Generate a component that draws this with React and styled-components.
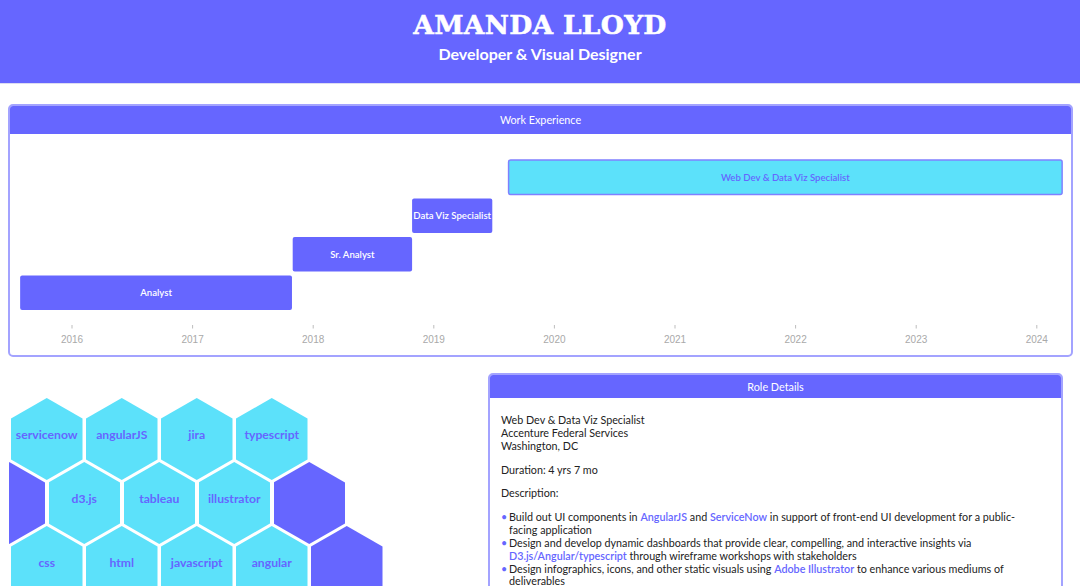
import React from "react";
import styled, { createGlobalStyle } from "styled-components";

const PURPLE = "#6666ff";
const CYAN = "#5ce1fa";
const LINE = "#a3a3ff";

const GlobalStyle = createGlobalStyle`
  body {
    margin: 0;
    background: #ffffff;
    font-family: Lato, "Noto Sans", sans-serif;
    color: #222;
  }
`;

const Header = styled.header`
  background: ${PURPLE};
  height: 73px;
  padding-top: 10px;
  border-bottom: 1px solid #dcdcf2;
  display: flex;
  flex-direction: column;
  align-items: center;
  color: #fff;
`;

const Name = styled.h1`
  margin: 0;
  font-family: "DejaVu Serif", "Liberation Serif", serif;
  font-weight: 700;
  font-size: 26.5px;
  line-height: 30px;
  letter-spacing: 0.3px;
  -webkit-text-stroke: 0.5px #fff;
`;

const Tagline = styled.h2`
  margin: 4px 0 0;
  font-family: Lato, sans-serif;
  font-weight: 700;
  font-size: 16px;
  line-height: 20px;
`;

const Main = styled.main`
  padding: 20px 7px 0 8px;
`;

const Panel = styled.section`
  box-sizing: border-box;
  border: 2px solid ${LINE};
  border-radius: 5px;
  overflow: hidden;
  background: #fff;
`;

const PanelTitle = styled.div`
  background: ${PURPLE};
  color: #fff;
  text-align: center;
  font-size: 10.8px;
  height: ${(p) => p.$h}px;
  line-height: ${(p) => p.$h}px;
`;

const ChartSvg = styled.svg`
  display: block;
`;

const BarLabel = styled.text`
  font-family: Lato, sans-serif;
  font-weight: 600;
  font-size: 9.6px;
`;

const YearLabel = styled.text`
  font-family: "Liberation Sans", Arial, sans-serif;
  font-size: 10px;
  fill: #a9a9a9;
`;

const Lower = styled.div`
  display: flex;
  margin-top: 16px;
  gap: 10px;
`;

const HexBoard = styled.div`
  flex: 1;
  overflow: hidden;
  margin-left: 1px;
  padding: 25px 0 0 2px;
  height: 200px;
`;

const HexRow = styled.div`
  display: flex;
  gap: 3.5px;
  margin-left: ${(p) => (p.$shift ? "-37.5px" : "0")};
  & + & {
    margin-top: -18px;
  }
`;

const Hex = styled.div`
  flex: 0 0 71.5px;
  height: 82px;
  clip-path: polygon(50% 0, 100% 25%, 100% 75%, 50% 100%, 0 75%, 0 25%);
  background: ${(p) => (p.$filled ? PURPLE : CYAN)};
  color: ${PURPLE};
  display: flex;
  align-items: center;
  justify-content: center;
  padding-bottom: 9px;
  box-sizing: border-box;
  font-weight: 700;
  font-size: 12.2px;
`;

const RolePanel = styled(Panel)`
  flex: 0 0 575px;
  margin-right: 10px;
  align-self: flex-start;
`;

const RoleBody = styled.div`
  padding: 16px 30px 20px 11px;
  font-size: 10.75px;
  line-height: 12.85px;
`;

const Para = styled.p`
  margin: 0 0 11px;
`;

const Bullets = styled.ul`
  margin: 0;
  padding: 0;
  list-style: none;
`;

const Bullet = styled.li`
  padding-left: 8px;
  &::before {
    content: "•";
    color: ${PURPLE};
    display: inline-block;
    width: 8px;
    margin-left: -8px;
  }
`;

const Tech = styled.span`
  color: ${PURPLE};
  font-weight: 600;
`;

const jobs = [
  { title: "Web Dev & Data Viz Specialist", start: 2019.62, end: 2024.21, row: 0, active: true },
  { title: "Data Viz Specialist", start: 2018.82, end: 2019.485, row: 1 },
  { title: "Sr. Analyst", start: 2017.83, end: 2018.82, row: 2 },
  { title: "Analyst", start: 2015.57, end: 2017.824, row: 3 },
];

const years = [2016, 2017, 2018, 2019, 2020, 2021, 2022, 2023, 2024];
const xOf = (y) => 62 + (y - 2016) * 120.6;

function Timeline() {
  return (
    <ChartSvg width="1061" height="221">
      {jobs.map((j) => {
        const x = xOf(j.start);
        const w = xOf(j.end) - x;
        const y = 26 + j.row * 38.5;
        return (
          <g key={j.title}>
            <rect
              x={x}
              y={y}
              width={w}
              height={34.5}
              rx={2}
              fill={j.active ? CYAN : PURPLE}
              stroke={j.active ? "#8080ff" : "none"}
              strokeWidth={j.active ? 1.5 : 0}
            />
            <BarLabel
              x={x + w / 2}
              y={y + 20.5}
              textAnchor="middle"
              fill={j.active ? PURPLE : "#fff"}
            >
              {j.title}
            </BarLabel>
          </g>
        );
      })}
      {years.map((yr) => (
        <g key={yr}>
          <line x1={xOf(yr)} x2={xOf(yr)} y1={191} y2={194.5} stroke="#bdbdbd" strokeWidth="1" />
          <YearLabel x={xOf(yr)} y={209} textAnchor="middle">
            {yr}
          </YearLabel>
        </g>
      ))}
    </ChartSvg>
  );
}

const skills = [
  { shift: false, items: ["servicenow", "angularJS", "jira", "typescript"] },
  { shift: true, items: [null, "d3.js", "tableau", "illustrator", null] },
  { shift: false, items: ["css", "html", "javascript", "angular", null] },
];

function SkillHive() {
  return (
    <HexBoard>
      {skills.map((r, i) => (
        <HexRow key={i} $shift={r.shift}>
          {r.items.map((s, k) => (
            <Hex key={k} $filled={!s}>
              {s}
            </Hex>
          ))}
        </HexRow>
      ))}
    </HexBoard>
  );
}

export default function App() {
  return (
    <>
      <GlobalStyle />
      <Header>
        <Name>AMANDA LLOYD</Name>
        <Tagline>Developer &amp; Visual Designer</Tagline>
      </Header>
      <Main>
        <Panel>
          <PanelTitle $h={28}>Work Experience</PanelTitle>
          <Timeline />
        </Panel>
        <Lower>
          <SkillHive />
          <RolePanel>
            <PanelTitle $h={23}>Role Details</PanelTitle>
            <RoleBody>
              <Para>
                Web Dev &amp; Data Viz Specialist
                <br />
                Accenture Federal Services
                <br />
                Washington, DC
              </Para>
              <Para>Duration: 4 yrs 7 mo</Para>
              <Para>Description:</Para>
              <Bullets>
                <Bullet>
                  Build out UI components in <Tech>AngularJS</Tech> and <Tech>ServiceNow</Tech> in
                  support of front-end UI development for a public-facing application
                </Bullet>
                <Bullet>
                  Design and develop dynamic dashboards that provide clear, compelling, and
                  interactive insights via <Tech>D3.js/Angular/typescript</Tech> through wireframe
                  workshops with stakeholders
                </Bullet>
                <Bullet>
                  Design infographics, icons, and other static visuals using{" "}
                  <Tech>Adobe Illustrator</Tech> to enhance various mediums of deliverables
                </Bullet>
              </Bullets>
            </RoleBody>
          </RolePanel>
        </Lower>
      </Main>
    </>
  );
}
